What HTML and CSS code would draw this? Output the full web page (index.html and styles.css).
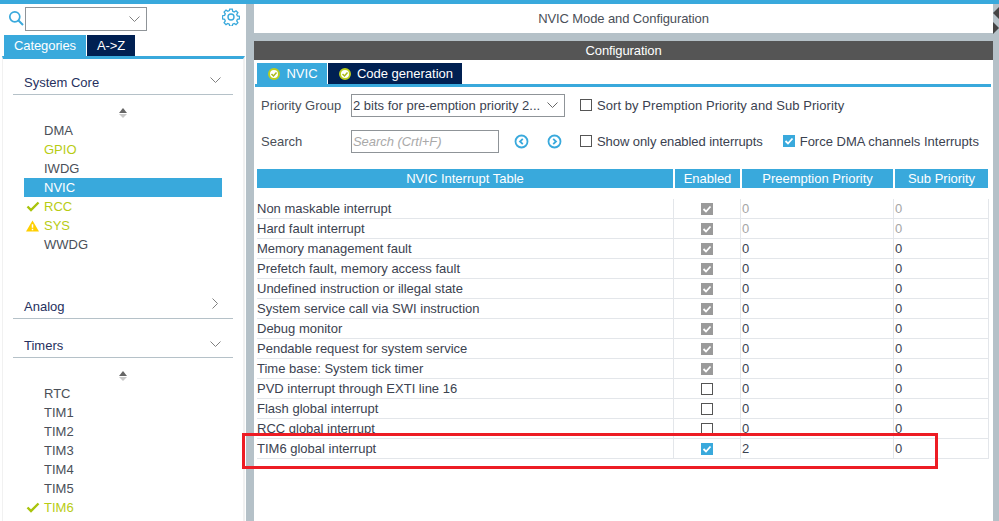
FILE: index.html
```html
<!DOCTYPE html>
<html lang="en">
<head>
<meta charset="utf-8">
<title>NVIC Mode and Configuration</title>
<link rel="stylesheet" href="styles.css">
</head>
<body>
<div class="app">
  <aside class="side">
    <div class="search-row">
      <svg class="mag" width="16" height="16" viewBox="0 0 16 16"><circle cx="6.800" cy="6.800" r="5" fill="none" stroke="#39a9dc" stroke-width="1.700"/><path d="M10.500 10.500L15 15" stroke="#39a9dc" stroke-width="1.900"/></svg>
      <div class="combo"><svg width="11" height="6" viewBox="0 0 11 6"><path d="M.5.500l5 5 5-5" fill="none" stroke="#808080" stroke-width="1"/></svg></div>
      <svg class="gear" width="18" height="18" viewBox="0 0 18 18"><g fill="none" stroke="#39a9dc"><circle cx="9" cy="9" r="3" stroke-width="1.400"/><path stroke-width="1.300" d="M7.700 1.200h2.600l.4 2.100 1.500.7 1.800-1.200 1.900 1.900-1.200 1.800.7 1.500 2.100.4v2.600l-2.100.4-.7 1.500 1.200 1.800-1.900 1.900-1.800-1.200-1.500.7-.4 2.100H7.700l-.4-2.100-1.500-.7-1.800 1.200-1.900-1.900 1.200-1.800-.7-1.500-2.100-.4V7.700l2.100-.4.7-1.500-1.200-1.800 1.900-1.900 1.800 1.200 1.500-.7z"/></g></svg>
    </div>
    <div class="tabs side-tabs">
      <div class="tab on">Categories</div>
      <div class="tab">A-&gt;Z</div>
    </div>
    <div class="cats">
      <div class="cat first"><span>System Core</span><svg width="11" height="6" viewBox="0 0 11 6"><path d="M.5.500l5 5 5-5" fill="none" stroke="#808080" stroke-width="1"/></svg></div>
      <div class="sort"><i class="up"></i><i class="down"></i></div>
      <ul class="items">
        <li>DMA</li>
        <li class="ok">GPIO</li>
        <li>IWDG</li>
        <li class="sel">NVIC</li>
        <li class="ok"><svg class="mark" width="14" height="11" viewBox="0 0 14 11"><path d="M1.500 5.500l3.500 3.500 7.500-7.500" fill="none" stroke="#a9c40c" stroke-width="2.400"/></svg>RCC</li>
        <li class="ok"><svg class="mark" width="13" height="12" viewBox="0 0 14 12"><path d="M7 0l7 12H0z" fill="#ffcf00"/><path d="M7 4v4M7 9v1.500" stroke="#fff" stroke-width="1.600"/></svg>SYS</li>
        <li>WWDG</li>
      </ul>
      <div class="cat analog"><span>Analog</span><svg width="6" height="11" viewBox="0 0 6 11"><path d="M.5.500l5 5-5 5" fill="none" stroke="#808080" stroke-width="1"/></svg></div>
      <div class="cat timers"><span>Timers</span><svg width="11" height="6" viewBox="0 0 11 6"><path d="M.5.500l5 5 5-5" fill="none" stroke="#808080" stroke-width="1"/></svg></div>
      <div class="sort"><i class="up"></i><i class="down"></i></div>
      <ul class="items">
        <li>RTC</li>
        <li>TIM1</li>
        <li>TIM2</li>
        <li>TIM3</li>
        <li>TIM4</li>
        <li>TIM5</li>
        <li class="ok"><svg class="mark" width="14" height="11" viewBox="0 0 14 11"><path d="M1.500 5.500l3.500 3.500 7.500-7.500" fill="none" stroke="#a9c40c" stroke-width="2.400"/></svg>TIM6</li>
      </ul>
    </div>
  </aside>

  <main class="main">
    <div class="title">NVIC Mode and Configuration</div>
    <section class="panel">
      <div class="bar">Configuration</div>
      <div class="tabs main-tabs">
        <div class="tab on"><svg width="12" height="12" viewBox="0 0 12 12"><circle cx="6" cy="6" r="5" fill="#fff" stroke="#bccf1e" stroke-width="2"/><path d="M3.500 6l2 2 3-3.500" fill="none" stroke="#a9b81a" stroke-width="1.500"/></svg>NVIC</div>
        <div class="tab"><svg width="12" height="12" viewBox="0 0 12 12"><circle cx="6" cy="6" r="5" fill="#fff" stroke="#bccf1e" stroke-width="2"/><path d="M3.500 6l2 2 3-3.500" fill="none" stroke="#a9b81a" stroke-width="1.500"/></svg>Code generation</div>
      </div>
      <div class="controls">
        <div class="ctl-row r1">
          <label class="lbl">Priority Group</label>
          <div class="select"><span>2 bits for pre-emption priority 2...</span><svg width="11" height="6" viewBox="0 0 11 6"><path d="M.5.500l5 5 5-5" fill="none" stroke="#666" stroke-width="1"/></svg></div>
          <span class="chk"><i class="box"></i>Sort by Premption Priority and Sub Priority</span>
        </div>
        <div class="ctl-row r2">
          <label class="lbl">Search</label>
          <div class="input">Search (Crtl+F)</div>
          <svg class="nav" width="15" height="15" viewBox="0 0 15 15"><circle cx="7.500" cy="7.500" r="6" fill="none" stroke="#39a9dc" stroke-width="1.800"/><path d="M8.800 4.800L6 7.500l2.800 2.700" fill="none" stroke="#39a9dc" stroke-width="1.800"/></svg>
          <svg class="nav nav2" width="15" height="15" viewBox="0 0 15 15"><circle cx="7.500" cy="7.500" r="6" fill="none" stroke="#39a9dc" stroke-width="1.800"/><path d="M6.200 4.800L9 7.500l-2.800 2.700" fill="none" stroke="#39a9dc" stroke-width="1.800"/></svg>
          <span class="chk c2"><i class="box"></i>Show only enabled interrupts</span>
          <span class="chk c3"><i class="box checked"><svg width="12" height="12" viewBox="0 0 12 12"><path d="M2.500 6l2.500 2.500 4.500-5" fill="none" stroke="#fff" stroke-width="1.800"/></svg></i>Force DMA channels Interrupts</span>
        </div>
      </div>
      <div class="thead">
        <div>NVIC Interrupt Table</div><div>Enabled</div><div>Preemption Priority</div><div>Sub Priority</div>
      </div>
      <div class="tbody">
        <div class="row"><div>Non maskable interrupt</div><div><i class="box dis"><svg width="12" height="12" viewBox="0 0 12 12"><path d="M2.500 6l2.500 2.500 4.500-5" fill="none" stroke="#fff" stroke-width="1.800"/></svg></i></div><div class="mute">0</div><div class="mute">0</div></div>
        <div class="row"><div>Hard fault interrupt</div><div><i class="box dis"><svg width="12" height="12" viewBox="0 0 12 12"><path d="M2.500 6l2.500 2.500 4.500-5" fill="none" stroke="#fff" stroke-width="1.800"/></svg></i></div><div class="mute">0</div><div class="mute">0</div></div>
        <div class="row"><div>Memory management fault</div><div><i class="box dis"><svg width="12" height="12" viewBox="0 0 12 12"><path d="M2.500 6l2.500 2.500 4.500-5" fill="none" stroke="#fff" stroke-width="1.800"/></svg></i></div><div>0</div><div>0</div></div>
        <div class="row"><div>Prefetch fault, memory access fault</div><div><i class="box dis"><svg width="12" height="12" viewBox="0 0 12 12"><path d="M2.500 6l2.500 2.500 4.500-5" fill="none" stroke="#fff" stroke-width="1.800"/></svg></i></div><div>0</div><div>0</div></div>
        <div class="row"><div>Undefined instruction or illegal state</div><div><i class="box dis"><svg width="12" height="12" viewBox="0 0 12 12"><path d="M2.500 6l2.500 2.500 4.500-5" fill="none" stroke="#fff" stroke-width="1.800"/></svg></i></div><div>0</div><div>0</div></div>
        <div class="row"><div>System service call via SWI instruction</div><div><i class="box dis"><svg width="12" height="12" viewBox="0 0 12 12"><path d="M2.500 6l2.500 2.500 4.500-5" fill="none" stroke="#fff" stroke-width="1.800"/></svg></i></div><div>0</div><div>0</div></div>
        <div class="row"><div>Debug monitor</div><div><i class="box dis"><svg width="12" height="12" viewBox="0 0 12 12"><path d="M2.500 6l2.500 2.500 4.500-5" fill="none" stroke="#fff" stroke-width="1.800"/></svg></i></div><div>0</div><div>0</div></div>
        <div class="row"><div>Pendable request for system service</div><div><i class="box dis"><svg width="12" height="12" viewBox="0 0 12 12"><path d="M2.500 6l2.500 2.500 4.500-5" fill="none" stroke="#fff" stroke-width="1.800"/></svg></i></div><div>0</div><div>0</div></div>
        <div class="row"><div>Time base: System tick timer</div><div><i class="box dis"><svg width="12" height="12" viewBox="0 0 12 12"><path d="M2.500 6l2.500 2.500 4.500-5" fill="none" stroke="#fff" stroke-width="1.800"/></svg></i></div><div>0</div><div>0</div></div>
        <div class="row"><div>PVD interrupt through EXTI line 16</div><div><i class="box"></i></div><div>0</div><div>0</div></div>
        <div class="row"><div>Flash global interrupt</div><div><i class="box"></i></div><div>0</div><div>0</div></div>
        <div class="row"><div>RCC global interrupt</div><div><i class="box"></i></div><div>0</div><div>0</div></div>
        <div class="row"><div>TIM6 global interrupt</div><div><i class="box checked"><svg width="12" height="12" viewBox="0 0 12 12"><path d="M2.500 6l2.500 2.500 4.500-5" fill="none" stroke="#fff" stroke-width="1.800"/></svg></i></div><div>2</div><div>0</div></div>
      </div>
    </section>
  </main>
  <div class="split"><i class="tl"></i><i class="tr"></i></div>
  <div class="annot"></div>
</div>
</body>
</html>
```
FILE: styles.css
```css
* { box-sizing: border-box; }
html, body { margin: 0; height: 100%; overflow: hidden; }
body { font-family: "Liberation Sans", Arial, sans-serif; font-size: 13px; color: #3b4250; background: #b5c1c8; }
ul { list-style: none; margin: 0; padding: 0; }
i { display: block; font-style: normal; }

.app { position: relative; display: flex; height: 521px; border-top: 4px solid #39a9dc; }

/* sidebar */
.side { width: 246px; flex: none; background: #fff; display: flex; flex-direction: column; }
.search-row { height: 31px; display: flex; align-items: flex-start; padding: 3px 0 0 8px; }
.mag { margin-top: 3px; }
.combo { width: 122px; height: 24px; margin-left: 1px; border: 1px solid #8f9498; display: flex; align-items: center; justify-content: flex-end; padding-right: 6px; }
.gear { margin: 1px 0 0 75px; }

.tabs { display: flex; }
.tab { color: #fff; background: #002052; display: flex; align-items: center; justify-content: center; }
.tab.on { background: #39a9dc; }
.side-tabs { height: 21px; padding-left: 4px; gap: 1px; letter-spacing: -.1px; }
.side-tabs .tab { width: 48px; }
.side-tabs .tab.on { width: 82px; }

.cats { flex: 1; min-height: 0; margin: 0 1px 0 2px; border-top: 3px solid #39a9dc; border-left: 1px solid #f1f1f1; border-right: 2px solid #f1f1f1; padding: 0 0 0 10px; overflow: hidden; }
.cat { width: 220px; height: 36px; padding: 0 12px 0 11px; border-bottom: 1px solid #b5c1c8; display: flex; align-items: center; justify-content: space-between; color: #26305e; }
.cat span { padding-top: 11px; }
.cat svg { margin-top: 6px; }
.cat.analog { height: 31px; margin-top: 34px; padding-right: 15px; }
.cat.analog svg { margin-top: 0; }
.cat.timers { height: 30px; margin-top: 9px; }
.cat.timers svg { margin-top: 3px; }
.cat.analog span { padding-top: 7px; }
.cat.timers span { padding-top: 5px; }

.sort { width: 220px; height: 26px; display: flex; flex-direction: column; align-items: center; justify-content: center; gap: 1px; padding-top: 10px; }
.sort .up { border: 4px solid transparent; border-top: 0; border-bottom: 5px solid #666; }
.sort .down { border: 4px solid transparent; border-bottom: 0; border-top: 4px solid #c8c8c8; }

.items { width: 209px; margin-left: 11px; color: #4a4f58; }
.items li { position: relative; height: 19px; line-height: 19px; padding-left: 20px; width: 198px; }
.items .ok { color: #b8cc14; }
.items .sel { background: #39a9dc; color: #fff; }
.mark { position: absolute; left: 2px; top: 4px; }

/* main */
.main { width: 739px; margin-left: 8px; flex: none; display: flex; flex-direction: column; }
.title { height: 29px; background: #fff; text-align: center; line-height: 29px; color: #4a4f58; letter-spacing: -.1px; }
.panel { flex: 1; margin-top: 8px; background: #fff; }
.bar { height: 19px; line-height: 19px; background: #555; color: #fff; text-align: center; letter-spacing: -.1px; }
.main-tabs { height: 24px; padding: 3px 0 0 3px; gap: 1px; margin-right: 2px; }
.main-tabs .tab { height: 21px; gap: 6px; padding-left: 2px; }
.main-tabs .tab.on { width: 70px; }
.main-tabs .tab:last-child { width: 134px; }
.controls { margin: 0 2px 0 1px; border-top: 3px solid #39a9dc; height: 85px; }
.ctl-row { display: flex; align-items: center; }
.r1 { height: 24px; margin-top: 6px; }
.r2 { height: 24px; margin-top: 12px; }
.lbl { width: 96px; padding-left: 6px; color: #4a4f58; }
.select { width: 214px; height: 23px; border: 1px solid #8f9498; display: flex; align-items: center; justify-content: space-between; padding: 0 6px 0 1px; white-space: nowrap; }
.input { width: 148px; height: 23px; line-height: 21px; border: 1px solid #8f9498; padding-left: 1px; color: #a9a9a9; font-style: italic; letter-spacing: -.05px; }
.nav { margin-left: 15px; flex: none; }
.nav2 { margin-left: 18px; }
.chk { display: flex; align-items: center; gap: 5px; white-space: nowrap; }
.r1 .chk { margin-left: 15px; letter-spacing: .07px; }
.c2 { margin-left: 18px; letter-spacing: -.07px; }
.c3 { margin-left: 20px; }
.box { width: 12px; height: 12px; border: 1px solid #555; flex: none; background: #fff; }
.box.checked { background: #39a9dc; border: 0; }
.box.dis { background: #9a9a9a; border: 0; }
.box svg { display: block; }

.thead { display: grid; grid-template-columns: 416px 65px 151px 93px; gap: 2px; margin-left: 3px; height: 19px; }
.thead div { background: #39a9dc; color: #fff; text-align: center; line-height: 19px; }
.tbody { margin: 11px 0 0 3px; width: 732px; }
.row { display: grid; grid-template-columns: 417px 67px 153px 95px; height: 20px; border-bottom: 1px solid #e3e6ea; line-height: 20px; }
.row > div { border-right: 1px solid #e3e6ea; white-space: nowrap; }
.row > div:nth-child(2) { display: flex; align-items: center; justify-content: center; padding-bottom: 1px; }
.row > div:nth-child(3), .row > div:nth-child(4) { padding-left: 1px; }
.mute { color: #a6a6a6; }

.split { flex: 1; position: relative; }
.split .tl { position: absolute; right: 0; top: 3px; border: 6px solid transparent; border-left: 0; border-right: 6px solid #444; }
.split .tr { position: absolute; right: 0; top: 18px; border: 6px solid transparent; border-right: 0; border-left: 6px solid #444; }

.annot { position: absolute; left: 242px; top: 429px; width: 696px; height: 36px; border: 3px solid #ed1c24; pointer-events: none; }
```
